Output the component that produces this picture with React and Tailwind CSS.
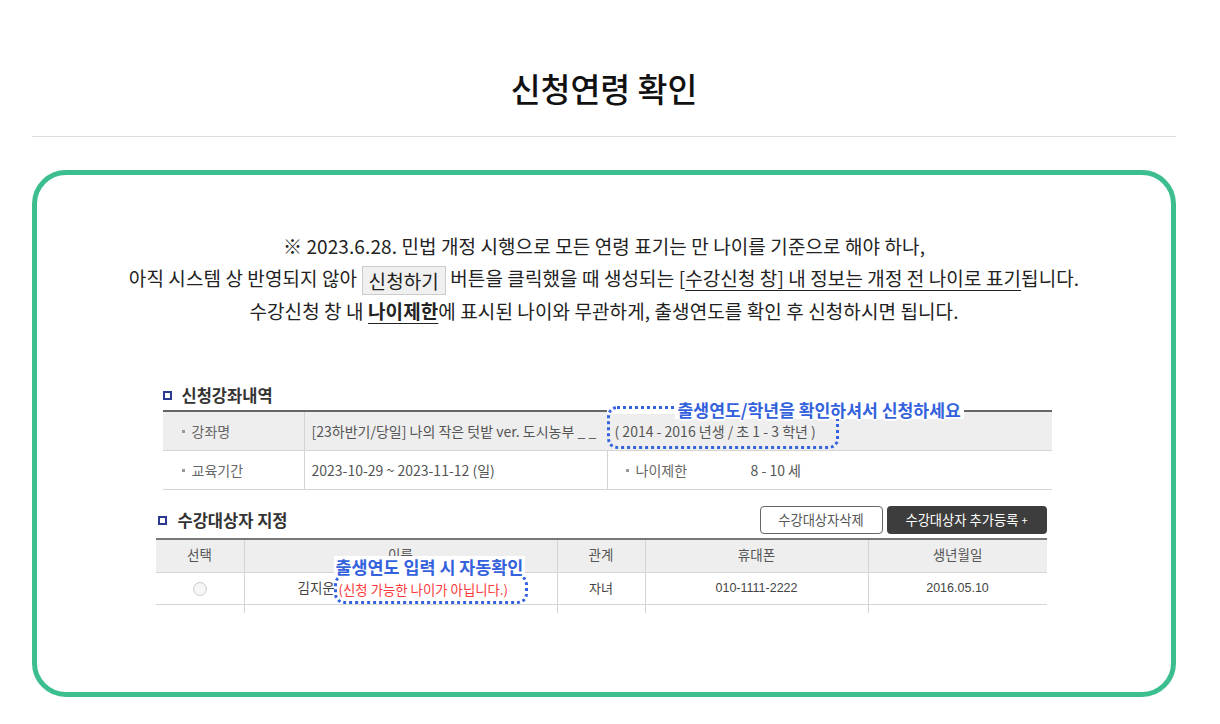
import React from 'react';

const Bullet = () => <span className="inline-block w-[3px] h-[3px] bg-[#999] mr-[7px]" />;

const Marker = () => <span className="inline-block w-[9px] h-[9px] border-2 border-[#2b3990] bg-white" />;

const CourseInfo = () => {
  return (
    <div className="ml-[7px] w-[889px]">
      <div className="h-[29px] flex items-center gap-[10px]">
        <Marker />
        <span className="text-[16.5px] font-bold text-[#333]">신청강좌내역</span>
      </div>
      <div className="border-t-2 border-[#666] text-[14px]">
        <div className="h-[39px] flex bg-[#eeeeee] border-b border-[#d4d4d4]">
          <div className="w-[142px] flex items-center pl-[19px] border-r border-[#d4d4d4] text-[#666]">
            <Bullet />강좌명
          </div>
          <div className="flex-1 flex items-center pl-[7px] text-[#555] whitespace-nowrap">
            <span className="w-[303px]">[23하반기/당일] 나의 작은 텃밭 ver. 도시농부 _ _</span>
            <span>( 2014 - 2016 년생 / 초 1 - 3 학년 )</span>
          </div>
        </div>
        <div className="h-[39px] flex border-b border-[#d4d4d4]">
          <div className="w-[142px] flex items-center pl-[19px] border-r border-[#d4d4d4] text-[#666]">
            <Bullet />교육기간
          </div>
          <div className="w-[303px] flex items-center pl-[7px] border-r border-[#d4d4d4] text-[#555]">
            2023-10-29 ~ 2023-11-12 (일)
          </div>
          <div className="w-[143px] flex items-center pl-[18px] text-[#666]">
            <Bullet />나이제한
          </div>
          <div className="flex items-center text-[#555]">8 - 10 세</div>
        </div>
      </div>
    </div>
  );
};

const Applicants = () => {
  const cols = 'grid grid-cols-[89px_313px_88px_223px_178px]';
  return (
    <div className="w-[891px] mt-[16px]">
      <div className="h-[28px] flex items-center justify-between">
        <div className="flex items-center gap-[11px] pl-[2px]">
          <Marker />
          <span className="text-[16.5px] font-bold text-[#333]">수강대상자 지정</span>
        </div>
        <div className="flex gap-[4px] h-[28px]">
          <button className="w-[123px] border border-[#666] rounded-[4px] text-[13.3px] text-[#555] bg-white">
            수강대상자삭제
          </button>
          <button className="w-[160px] rounded-[4px] bg-[#3d3d3d] text-white text-[13.3px]">
            수강대상자 추가등록 <span className="text-[11px]">+</span>
          </button>
        </div>
      </div>
      <div className="mt-[4px] border-t-2 border-[#777] text-[12.5px] font-['Liberation_Sans','Noto_Sans_CJK_KR',sans-serif]">
        <div className={`${cols} h-[33px] bg-[#eeeeee] border-b border-[#d4d4d4] text-[#555] text-[13.5px]`}>
          <div className="flex items-center justify-center border-r border-[#d4d4d4]">선택</div>
          <div className="flex items-center justify-center border-r border-[#d4d4d4]">이름</div>
          <div className="flex items-center justify-center border-r border-[#d4d4d4]">관계</div>
          <div className="flex items-center justify-center border-r border-[#d4d4d4]">휴대폰</div>
          <div className="flex items-center justify-center">생년월일</div>
        </div>
        <div className={`${cols} h-[32px] border-b border-[#d4d4d4] text-[#444]`}>
          <div className="flex items-center justify-center border-r border-[#d4d4d4]">
            <span className="w-[14px] h-[14px] rounded-full border border-[#ccc] bg-[#f6f6f6]" />
          </div>
          <div className="flex items-center pl-[53px] border-r border-[#d4d4d4] text-[13.5px]">김지운</div>
          <div className="flex items-center justify-center border-r border-[#d4d4d4] text-[13px]">자녀</div>
          <div className="flex items-center justify-center border-r border-[#d4d4d4]">010-1111-2222</div>
          <div className="flex items-center justify-center">2016.05.10</div>
        </div>
        <div className={`${cols} h-[8px]`}>
          <div className="border-r border-[#d4d4d4]" />
          <div className="border-r border-[#d4d4d4]" />
          <div className="border-r border-[#d4d4d4]" />
          <div className="border-r border-[#d4d4d4]" />
          <div />
        </div>
      </div>
    </div>
  );
};

const outline =
  '[text-shadow:-1px_-1px_0_#fff,1px_-1px_0_#fff,-1px_1px_0_#fff,1px_1px_0_#fff,0_2px_0_#fff,0_-2px_0_#fff,2px_0_0_#fff,-2px_0_0_#fff]';

const Sample = () => {
  return (
    <div className="relative w-[897px] h-[232px] mx-auto mt-[54px] text-left">
      <CourseInfo />
      <Applicants />

      <div className="absolute left-[451px] top-[26px] w-[70px] h-[7px] bg-white" />
      <div className="absolute left-[451px] top-[25px] w-[232px] h-[43px] border-[3px] border-dotted border-[#3563e0] rounded-[10px]" />
      <div className={`absolute left-[519px] top-[20px] h-[18px] px-[3px] bg-white text-[17.2px] leading-[18px] font-bold text-[#3462dc] whitespace-nowrap ${outline}`}>
        출생연도/학년을 확인하셔서 신청하세요
      </div>

      <div className="absolute left-[178px] top-[193px] w-[194px] h-[30px] border-[3px] border-dotted border-[#3563e0] rounded-[10px] flex items-center pl-[2px] text-[13.4px] text-[#ff3b3b] whitespace-nowrap">
        (신청 가능한 나이가 아닙니다.)
      </div>
      <div className={`absolute left-[178px] top-[175px] h-[21px] px-[2px] bg-white text-[17.4px] leading-[21px] font-bold text-[#3462dc] whitespace-nowrap ${outline}`}>
        출생연도 입력 시 자동확인
      </div>
    </div>
  );
};

export default function App() {
  return (
    <div className="min-h-[724px] bg-white font-['Noto_Sans_CJK_KR',sans-serif]">
      <div className="w-[1144px] ml-8">
        <div className="pt-[67px] pb-[28px] border-b border-[#dddddd]">
          <h1 className="text-[32.5px] leading-[41px] font-medium text-center text-[#111]">신청연령 확인</h1>
        </div>
        <div className="mt-[33px] h-[527px] border-[5px] border-[#3dbe8f] rounded-[34px] pt-[55px]">
          <p className="text-[19px] leading-[32px] tracking-[0.1px] text-center text-[#222]">
            ※ 2023.6.28. 민법 개정 시행으로 모든 연령 표기는 만 나이를 기준으로 해야 하나,
            <br />
            아직 시스템 상 반영되지 않아{' '}
            <span className="inline-block h-[29px] leading-[27px] px-[6px] bg-[#f0f0f0] border border-[#cccccc] align-middle">
              신청하기
            </span>{' '}
            버튼을 클릭했을 때 생성되는 [
            <span className="underline underline-offset-[4px]">수강신청 창] 내 정보는 개정 전 나이로 표기</span>
            됩니다.
            <br />
            수강신청 창 내{' '}
            <span className="font-bold underline underline-offset-[4px]">나이제한</span>에 표시된 나이와 무관하게, 출생연도를 확인 후 신청하시면 됩니다.
          </p>
          <Sample />
        </div>
      </div>
    </div>
  );
}
